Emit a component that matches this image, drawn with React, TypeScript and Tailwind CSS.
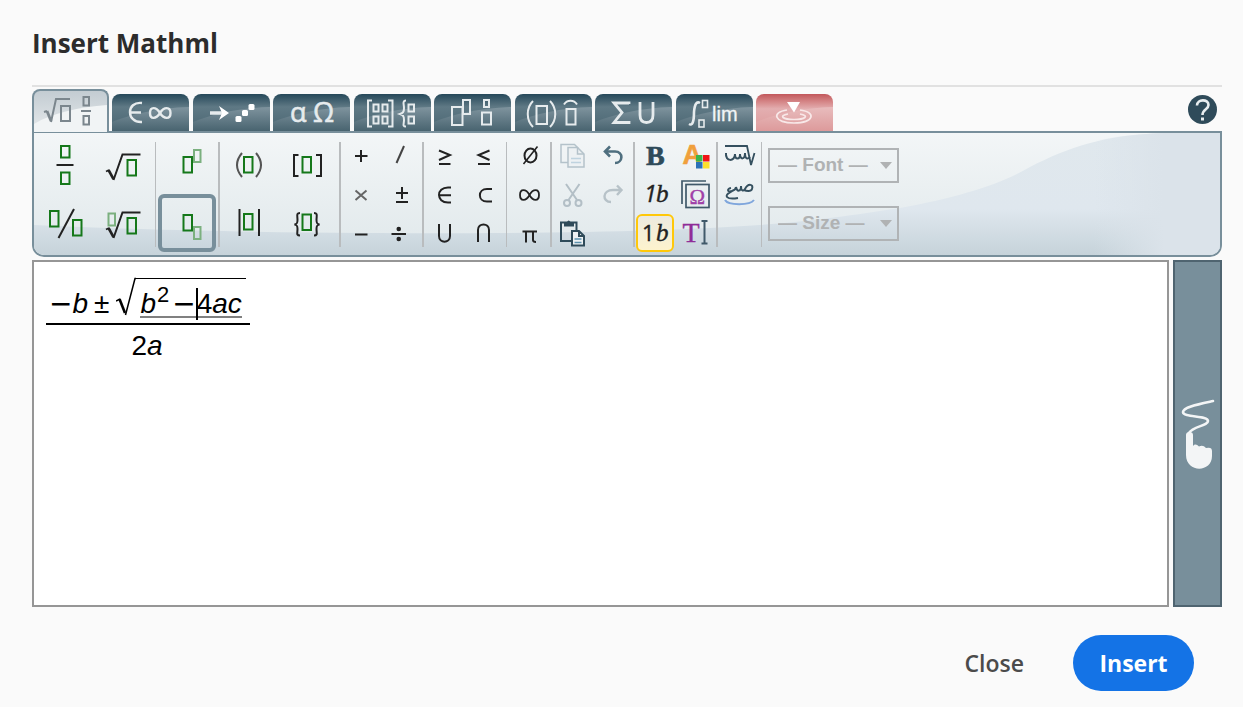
import type { ReactNode } from "react";

const SANS = "'Liberation Sans', Arial, sans-serif";
const SERIF = "'Liberation Serif', 'Times New Roman', serif";
const HUMANIST = "'Open Sans', 'Noto Sans', sans-serif";
const SYMBOL = "'DejaVu Sans', sans-serif";

function Tab({ label, danger, children }: { label: string; danger?: boolean; children: ReactNode }) {
  return (
    <button
      type="button"
      role="tab"
      aria-selected={false}
      aria-label={label}
      className={`relative h-[37px] w-[77px] overflow-hidden rounded-t-lg ${
        danger
          ? "bg-linear-to-b from-[#c2585c] via-[#e3aeb0] via-40% to-[#dd9a9b]"
          : "bg-linear-to-b from-[#26495a] via-[#5f7985] via-35% to-[#4a6672]"
      }`}
    >
      <svg viewBox="0 0 77 37" className="block h-[37px] w-[77px]">
        <path
          d="M0 28 C20 20 45 14 77 13 V37 H0Z"
          fill={danger ? "url(#glossRed)" : "url(#gloss)"}
        />
        <g fill="none" stroke="#e6ebed" strokeWidth="2">
          {children}
        </g>
      </svg>
    </button>
  );
}

function BigTool({ label, active, children }: { label: string; active?: boolean; children: ReactNode }) {
  return (
    <button
      type="button"
      aria-label={label}
      aria-pressed={!!active}
      className={`flex size-[58px] items-center justify-center ${
        active ? "rounded-md border-4 border-[#788f9b]" : ""
      }`}
    >
      <svg viewBox="-25 -25 50 50" className="size-[50px] shrink-0" fill="none" stroke="#222" strokeWidth="2">
        {children}
      </svg>
    </button>
  );
}

function Tool({
  label,
  active,
  disabled,
  children,
}: {
  label: string;
  active?: boolean;
  disabled?: boolean;
  children: ReactNode;
}) {
  return (
    <button
      type="button"
      aria-label={label}
      disabled={disabled}
      className={`flex size-[38px] items-center justify-center ${
        active ? "rounded-md border-2 border-[#ffc80a] bg-linear-to-b from-[#eceae0] to-[#fdf3cd]" : ""
      }`}
    >
      <svg viewBox="-17 -17 34 34" className="size-[34px] shrink-0" fill="none" stroke="#222" strokeWidth="2">
        {children}
      </svg>
    </button>
  );
}

const Slot = ({ x, y, w = 8.5, h = 15.5 }: { x: number; y: number; w?: number; h?: number }) => (
  <rect x={x} y={y} width={w} height={h} stroke="#15781a" strokeWidth="2" />
);
const FaintSlot = ({ x, y }: { x: number; y: number }) => (
  <rect x={x} y={y} width={6.5} height={12} stroke="#7bb07f" strokeWidth="2" />
);
const Radical = () => (
  <>
    <path d="M-17 6.500 L-14 5" strokeWidth="1.600" />
    <path d="M-14.500 5 L-9.500 14" strokeWidth="2.600" />
    <path d="M-9.500 15 L-0.500 -10.500 H17.500" strokeWidth="2" />
  </>
);

const Divider = ({ wide }: { wide?: boolean }) => (
  <div className={`h-[105px] shrink-0 bg-[#b9bcbe] ${wide ? "w-[2px]" : "w-px"}`} />
);

function SmallGroup({ width, children }: { width: string; children: ReactNode }) {
  return <div className={`grid h-[116px] shrink-0 grid-rows-3 place-items-center ${width}`}>{children}</div>;
}

function Picker({ label }: { label: string }) {
  return (
    <div className="relative">
      <select
        disabled
        aria-label={label}
        className="block h-[35px] w-[131px] appearance-none border-2 border-[#b0b3b5] bg-transparent pl-2 text-[19px] font-bold text-[#b0b2b3] opacity-100"
        style={{ fontFamily: SANS }}
      >
        <option>{`— ${label} —`}</option>
      </select>
      <svg viewBox="0 0 12 7" className="pointer-events-none absolute top-[14px] right-[7px] h-[7px] w-3">
        <path d="M0 0 H12 L6 7Z" fill="#b0b2b3" />
      </svg>
    </div>
  );
}

export default function App() {
  return (
    <main className="min-h-screen bg-[#fafafa] pr-[21px] pb-4 pl-8" style={{ fontFamily: HUMANIST }}>
      <header className="flex h-[87px] items-center border-b-2 border-[#e1e1e1]">
        <h1 className="text-[26px] leading-9 font-bold text-[#2c2c2c]">Insert Mathml</h1>
      </header>

      <div className="flex h-[44px] items-end justify-between">
        <div role="tablist" className="flex w-[801px] items-end justify-between">
          <button
            type="button"
            role="tab"
            aria-selected
            aria-label="General"
            className="relative z-10 -mb-px h-[43px] w-[77px] overflow-hidden rounded-t-lg border-2 border-b-0 border-[#788f9b] bg-linear-to-b from-[#c3ccd2] to-[#e6eaec]"
          >
            <svg viewBox="0 0 73 41" className="block h-[41px] w-[73px]" fill="none" stroke="#7b868d" strokeWidth="2">
              <path d="M0 33 C18 22 45 16 73 14 V41 H0Z" fill="#f1f4f5" stroke="none" />
              <path d="M10 21 L13 20" />
              <path d="M13 20 L17 30" strokeWidth="2.800" />
              <path d="M17 31 L22 8 H36" />
              <rect x="27" y="15" width="9" height="15" />
              <rect x="49.500" y="6" width="5.500" height="8.500" />
              <path d="M47 20 H57" />
              <rect x="49.500" y="25" width="5.500" height="8.500" />
            </svg>
          </button>
          <Tab label="Symbols">
            <path d="M30 9 C14 7 14 29 30 28 M18 18.500 H29" strokeWidth="2.400" />
            <path d="M48 19 C44 12.500 38 12.500 38 19 C38 25.500 44 25.500 48 19 C52 12.500 58.500 12.500 58.500 19 C58.500 25.500 52 25.500 48 19Z" strokeWidth="2.400" />
          </Tab>
          <Tab label="Arrows">
            <path d="M17 19 H30" strokeWidth="3.500" />
            <path d="M26 12 L36 19 L26 26 L29 19Z" fill="#fff" stroke="none" />
            <g fill="#fff" stroke="none">
              <rect x="42.500" y="22" width="6" height="6" rx="1.500" />
              <rect x="49" y="16" width="6" height="6" rx="1.500" />
              <rect x="55.500" y="10" width="6" height="6" rx="1.500" />
            </g>
          </Tab>
          <Tab label="Greek letters">
            <g fill="#e6ebed" stroke="#e6ebed" strokeWidth="0.600" fontFamily={HUMANIST}>
              <text x="17" y="28" fontSize="27">α</text>
              <text x="40" y="28" fontSize="27">Ω</text>
            </g>
          </Tab>
          <Tab label="Matrices">
            <path d="M18 6.500 H14 V32.500 H18 M34 6.500 H38.500 V32.500 H34 M52 6.500 C48 6.500 50 10.500 50 14 C50 18 49 19 46 20 C49 21 50 22 50 26 C50 30 48 32.500 52 32.500" />
            <rect x="19.500" y="10.500" width="5" height="7" />
            <rect x="28.500" y="10.500" width="5" height="7" />
            <rect x="19.500" y="22.500" width="5" height="7" />
            <rect x="28.500" y="22.500" width="5" height="7" />
            <rect x="54.500" y="10.500" width="5.500" height="7" />
            <rect x="54.500" y="22.500" width="5.500" height="7" />
          </Tab>
          <Tab label="Scripts and layout">
            <rect x="18" y="13" width="10.500" height="18" />
            <rect x="29" y="6" width="7" height="14" />
            <rect x="50" y="6" width="5" height="7" />
            <rect x="48" y="18.500" width="9" height="12" />
          </Tab>
          <Tab label="Decorations">
            <path d="M18 7 C11 14 11 26 18 33 M35 7 C42 14 42 26 35 33" strokeWidth="2" />
            <rect x="21.500" y="12" width="10.500" height="18" />
            <path d="M49 10.500 C52 5.500 59 5.500 62 10.500" />
            <rect x="51.500" y="15" width="9" height="15.500" />
          </Tab>
          <Tab label="Big operators">
            <path d="M34 10 V9 H19 L27 18.500 L19 28.500 H34 V27" strokeWidth="2.800" />
            <path d="M45 8 V21 Q45 28.500 51.500 28.500 Q58 28.500 58 21 V8" strokeWidth="2.800" />
          </Tab>
          <Tab label="Calculus">
            <path d="M24 9 Q19 6 18 18 Q18 33 13 30" strokeWidth="2.600" />
            <rect x="26.500" y="6.500" width="5" height="7" strokeWidth="1.600" />
            <rect x="23" y="26" width="5" height="7" strokeWidth="1.600" />
            <text x="36" y="27" fontSize="20" fill="#f1f4f5" stroke="#f1f4f5" strokeWidth="0.300" fontFamily={SANS}>
              lim
            </text>
          </Tab>
          <Tab label="Contextual" danger>
            <path d="M31 8 H44 L38 18.500Z" fill="#fff" stroke="none" />
            <g stroke="#f8e8e8" strokeWidth="1.700">
              <path d="M31 16 C15 18 18 29 38 29 C58 29 61 18 44 16" />
              <path d="M32 20 C22 22 27 25.500 38 25.500 C49 25.500 54 22 44 20" />
            </g>
          </Tab>
        </div>
        <button
          type="button"
          aria-label="Help"
          className="mr-[5px] mb-[7px] flex size-[29px] items-center justify-center rounded-full bg-[#2f4b5a]"
        >
          <svg viewBox="0 0 29 29" className="size-[29px]" fill="none" stroke="#e9eef0" strokeWidth="2.600">
            <path d="M9 10.500 C9 4 20.500 3.500 20.500 10 C20.500 14.500 14.500 14 14.500 20" />
            <path d="M14.500 22.500 V25.500" strokeWidth="3" />
          </svg>
        </button>
      </div>

      <div className="relative flex h-[126px] items-center overflow-hidden rounded-b-xl border-2 border-[#788f9b] bg-[#f1f4f5]">
        <svg viewBox="0 0 1186 122" preserveAspectRatio="none" className="absolute inset-0 size-full" aria-hidden="true">
          <defs>
            <linearGradient id="gloss" x2="0" y2="1">
              <stop offset="0" stopColor="#8a9da7" stopOpacity=".75" />
              <stop offset="1" stopColor="#48636f" stopOpacity=".75" />
            </linearGradient>
            <linearGradient id="glossRed" x2="0" y2="1">
              <stop offset="0" stopColor="#e8bcbd" />
              <stop offset="1" stopColor="#dd9a9b" />
            </linearGradient>
            <linearGradient id="sheet" x2="0" y2="1">
              <stop offset="0" stopColor="#f3f6f7" />
              <stop offset="1" stopColor="#e0e8eb" />
            </linearGradient>
            <linearGradient id="swoosh" gradientUnits="userSpaceOnUse" x1="0" y1="0" x2="0" y2="122">
              <stop offset="0" stopColor="#e0e8ed" />
              <stop offset=".62" stopColor="#dfe7ee" />
              <stop offset="1" stopColor="#c6d3da" />
            </linearGradient>
            <linearGradient id="edge">
              <stop offset="0" stopColor="#dbe3ea" stopOpacity="0" />
              <stop offset="1" stopColor="#dbe3ea" />
            </linearGradient>
          </defs>
          <rect width="1186" height="122" fill="url(#sheet)" />
          <path
            d="M0 92 C80 96 200 99 330 100 C520 101 640 98 726 92 C780 88 820 82 866 75 C925 64 965 52 996 34 C1035 14 1070 2 1130 0 H1186 V122 H0Z"
            fill="url(#swoosh)"
          />
          <path d="M1060 8 Q1085 2 1130 0 V122 H1060Z" fill="url(#edge)" />
          <rect x="1129" width="57" height="122" fill="#dbe3ea" />
        </svg>

        <div className="relative flex items-center">
          <div className="grid w-[121px] shrink-0 grid-cols-[58px_58px] pl-[2px]">
            <BigTool label="Fraction">
              <Slot x={-4} y={-19} h={11.5} />
              <path d="M-8.500 0 H8.500" />
              <Slot x={-4} y={7.5} h={11.5} />
            </BigTool>
            <BigTool label="Square root">
              <Radical />
              <Slot x={4.5} y={-5} />
            </BigTool>
            <BigTool label="Bevelled fraction">
              <Slot x={-15} y={-12} />
              <path d="M9 -14 L-6.500 15" />
              <Slot x={8} y={-3} />
            </BigTool>
            <BigTool label="Nth root">
              <FaintSlot x={-14.5} y={-9.5} />
              <Radical />
              <Slot x={4.5} y={-5} />
            </BigTool>
          </div>
          <Divider />
          <div className="grid w-[62px] shrink-0 pl-[2px]">
            <BigTool label="Superscript">
              <FaintSlot x={7} y={-15} />
              <Slot x={-3.5} y={-8} />
            </BigTool>
            <BigTool label="Subscript" active>
              <FaintSlot x={7} y={4} />
              <Slot x={-3.5} y={-8} />
            </BigTool>
          </div>
          <Divider wide />
          <div className="grid w-[119px] shrink-0 grid-cols-[58px_58px]">
            <BigTool label="Parentheses">
              <path d="M-7 -12 Q-17 0 -7 12 M7 -12 Q17 0 7 12" stroke="#555" />
              <Slot x={-5} y={-8} />
            </BigTool>
            <BigTool label="Square brackets">
              <path d="M-8.500 -10 H-13 V11 H-8.500 M9 -10 H14 V11 H9" />
              <Slot x={-4.5} y={-8} />
            </BigTool>
            <BigTool label="Vertical bars">
              <path d="M-9.500 -14 V13 M10 -14 V13" />
              <Slot x={-5} y={-9} />
            </BigTool>
            <BigTool label="Curly brackets">
              <path d="M-7 -10 C-11 -10 -9.500 -7 -9.500 -3 C-9.500 0 -10 1 -12.500 1.500 C-10 2 -9.500 3 -9.500 6 C-9.500 10 -11 12.500 -7 12.500 M7 -10 C11 -10 9.500 -7 9.500 -3 C9.500 0 10 1 12.500 1.500 C10 2 9.500 3 9.500 6 C9.500 10 11 12.500 7 12.500" />
              <Slot x={-4.5} y={-8.5} />
            </BigTool>
          </div>
          <Divider wide />

          <SmallGroup width="w-[81px] grid-cols-2">
            <Tool label="Plus">
              <path d="M-6 1 H6.500 M0 -5 V7" />
            </Tool>
            <Tool label="Slash">
              <path d="M2 -9 L-5.500 8" stroke="#444" />
            </Tool>
            <Tool label="Times">
              <path d="M-5.500 -3.500 L5.500 6 M5.500 -3.500 L-5.500 6" stroke="#666" />
            </Tool>
            <Tool label="Plus minus">
              <path d="M-6 -1 H6 M0 -7 V5 M-6 8 H6" />
            </Tool>
            <Tool label="Minus">
              <path d="M-6 1.500 H6.500" />
            </Tool>
            <Tool label="Divide">
              <path d="M-10.500 1 H4" />
              <circle cx="-3.250" cy="-4" r="1.300" fill="#222" />
              <circle cx="-3.250" cy="6" r="1.300" fill="#222" />
            </Tool>
          </SmallGroup>
          <Divider wide />

          <SmallGroup width="w-[82px] grid-cols-2">
            <Tool label="Greater or equal">
              <path d="M-6 -4.500 L5 0 L-6 5 M-6 9 H5.500" />
            </Tool>
            <Tool label="Less or equal">
              <path d="M3.500 -4.500 L-7.500 0 L3.500 5 M-8 9 H4" />
            </Tool>
            <Tool label="Element of">
              <path d="M6 -6.500 H3 C-9 -6.500 -9 8.500 3 8.500 H6 M-5 1.200 H6" />
            </Tool>
            <Tool label="Subset">
              <path d="M6 -5 H1 C-8.500 -5 -8.500 7.500 1 7.500 H6" />
            </Tool>
            <Tool label="Union">
              <path d="M-6 -9 V3 C-6 10.500 5 10.500 5 3 V-9" />
            </Tool>
            <Tool label="Intersection">
              <path d="M-8 9 V-3 C-8 -10.500 3 -10.500 3 -3 V9" />
            </Tool>
          </SmallGroup>
          <Divider />

          <SmallGroup width="w-[43px] pl-[3px]">
            <Tool label="Empty set">
              <ellipse cx="0.500" cy="0.500" rx="6" ry="7" />
              <path d="M7.500 -8.500 L-6.500 9" strokeWidth="1.600" />
            </Tool>
            <Tool label="Infinity">
              <path d="M-0.500 1 C-4 -5.500 -10 -5.500 -10 1 C-10 7.500 -4 7.500 -0.500 1 C3 -5.500 9 -5.500 9 1 C9 7.500 3 7.500 -0.500 1Z" strokeWidth="1.800" />
            </Tool>
            <Tool label="Pi">
              <path d="M-7.500 -1.500 H7 M-4 -1 V9.500 M3 -1 V7 Q3 9 6 9" />
            </Tool>
          </SmallGroup>
          <Divider wide />

          <SmallGroup width="w-[81px] grid-cols-2">
            <Tool label="Copy" disabled>
              <g stroke="#b4c2ca" strokeWidth="1.500">
                <path d="M-4 7.500 H-11 V-10.500 H2.500 L6 -7" />
                <path d="M-4 -7.500 H5.500 L12 -1 V12 H-4Z" fill="#edf1f3" />
                <path d="M5.500 -7.500 V-1 H12" />
                <path d="M-1 3.500 H9 M-1 7.500 H9" stroke="#bfd3df" />
              </g>
            </Tool>
            <Tool label="Undo">
              <path d="M-3 -8.500 L-8 -3.500 L-3 1.500 M-8 -3.500 H2 C11 -3.500 10 8 2 8" stroke="#4f6f7f" strokeWidth="2.600" />
            </Tool>
            <Tool label="Cut" disabled>
              <g stroke="#b3bfc6" strokeWidth="2">
                <path d="M-6 -10 L5 6 M7.500 -10 L-3.500 6" />
                <circle cx="-5" cy="9" r="3" />
                <circle cx="6.500" cy="9" r="3" />
              </g>
            </Tool>
            <Tool label="Redo" disabled>
              <path d="M4 -8.500 L8.500 -4 L4 1 M8.500 -4 H0 C-11 -4 -11 8 -2 8" stroke="#b7c2c8" strokeWidth="2.400" />
            </Tool>
            <Tool label="Paste">
              <g stroke="#2f4b5a" strokeWidth="2">
                <path d="M-1 8 H-11 V-10.500 H4.500 V-2" />
                <path d="M-8 -11 H-5 Q-3.500 -14 -1.500 -11 H2 V-6.500 H-8Z" fill="#2f4b5a" stroke="none" />
                <path d="M0 -2 H7 L12 3 V12.500 H0Z" fill="#eef2f4" />
                <path d="M7 -2 V3 H12" />
                <path d="M2.500 6 H9.500 M2.500 9.500 H9.500" stroke="#5c92ae" strokeWidth="1.500" />
              </g>
            </Tool>
          </SmallGroup>
          <Divider wide />

          <SmallGroup width="w-[81px] grid-cols-2">
            <Tool label="Bold">
              <text x="-9" y="10" fontSize="28" fontWeight="700" fill="#2f4b5a" stroke="#2f4b5a" strokeWidth="0.600" fontFamily={SERIF}>
                B
              </text>
            </Tool>
            <Tool label="Colour">
              <text x="-13.500" y="8.500" fontSize="27" fontWeight="700" fill="#f0a03c" stroke="#f0a03c" strokeWidth="0.600" fontFamily={SANS}>
                A
              </text>
              <g stroke="none">
                <rect x="0" y="0" width="6.500" height="6.500" fill="#3cb44a" />
                <rect x="7" y="0" width="6.500" height="6.500" fill="#f01414" />
                <rect x="0" y="7" width="6.500" height="6.500" fill="#2a72b8" />
                <rect x="7" y="7" width="6.500" height="6.500" fill="#fbe02c" />
              </g>
            </Tool>
            <Tool label="Italic">
              <g fill="#222" stroke="#222" strokeWidth="0.400" fontStyle="italic">
                <text x="-11" y="8" fontSize="23" fontFamily={HUMANIST}>1</text>
                <text x="1" y="8" fontSize="25" fontFamily={SERIF}>b</text>
              </g>
            </Tool>
            <Tool label="Special characters">
              <g stroke="#40596a" strokeWidth="1.700">
                <path d="M-14 10 V-13 H10" />
                <rect x="-10" y="-9.500" width="23" height="23" />
              </g>
              <text x="-6.500" y="9.500" fontSize="21" fill="#a040a8" stroke="#a040a8" strokeWidth="0.400" fontFamily={SERIF}>
                Ω
              </text>
            </Tool>
            <Tool label="Automatic style" active>
              <g fill="#222" stroke="#222" strokeWidth="0.400">
                <text x="-13" y="8" fontSize="22" fontFamily={HUMANIST}>1</text>
                <text x="1" y="8" fontSize="25" fontStyle="italic" fontFamily={SERIF}>b</text>
              </g>
            </Tool>
            <Tool label="Text mode">
              <text x="-13.500" y="8.500" fontSize="28" fill="#8f2c98" stroke="#8f2c98" strokeWidth="0.400" fontFamily={SERIF}>
                T
              </text>
              <path d="M5.500 -12 H11.500 M8.500 -12 V10.500 M5.500 10.500 H11.500" stroke="#40596a" />
            </Tool>
          </SmallGroup>
          <Divider wide />

          <SmallGroup width="w-[43px]">
            <Tool label="Right to left">
              <path d="M-15 -9 H7 L11 10 L14.500 -2" stroke="#35505f" strokeWidth="1.800" />
              <path
                d="M-14 -2 C-15 7 -5 7 -5 -1 C-5 5 0 5 0 -1 C0 5 5 5 5 -2 C5 5 8 4 10 2"
                stroke="#35505f"
                strokeWidth="2"
              />
            </Tool>
            <Tool label="Arabic style">
              <path
                d="M-9 -6 C-14 -5 -12 -1 -8 -3 C-18 2 -13 6 -2 4 M-8 -3 C-5 -4 -4 -5 -4 -7 C-3 -2 1 -2 1 -8 C1 -2 4 -3 5 -5 C8 -11 14 -10 12 -5 C11 -2 6 -3 4 -4"
                stroke="#35505f"
                strokeWidth="2"
              />
              <path d="M-15 6 C-12 11.500 10 11.500 14 6" stroke="#7fa6dc" strokeWidth="2" />
            </Tool>
          </SmallGroup>
          <Divider />

          <div className="flex flex-col gap-[23px] pl-[6px]">
            <Picker label="Font" />
            <Picker label="Size" />
          </div>
        </div>
      </div>

      <div className="mt-[3px] flex min-h-[347px] gap-1">
        <div
          role="textbox"
          aria-label="Formula"
          tabIndex={0}
          className="flex-1 border-2 border-[#969696] bg-white pt-[15px] pl-3 text-[28px] leading-8 text-black"
          style={{ fontFamily: SANS }}
        >
          <div className="flex w-[204px] flex-col items-center">
            <div className="flex h-12 w-full items-start border-b-2 border-black pl-[3px]">
              <span className="flex pt-[11px]">
                <span style={{ fontFamily: SYMBOL }}>−</span>
                <i>b</i>
                <span className="ml-[6px]">±</span>
              </span>
              <svg viewBox="0 0 20 42" className="ml-[7px] h-[42px] w-5 shrink-0" fill="none" stroke="#000">
                <path d="M0 24 L4 22" strokeWidth="1.500" />
                <path d="M3.500 22 L9 36" strokeWidth="2.600" />
                <path d="M9.500 38 L19 1.500 H20" strokeWidth="1.500" />
              </svg>
              <span className="mt-px flex h-[40px] items-start border-t border-black px-1">
                <span className="mt-[9px] flex h-[30px] items-start border-b-2 border-[#808080]">
                  <i>b</i>
                  <span className="-mt-[9px] ml-px text-[22px]">2</span>
                  <span className="ml-[3px]" style={{ fontFamily: SYMBOL }}>−</span>
                  <span className="-mr-px h-8 w-[2px] shrink-0 bg-black" />
                  <span>4</span>
                  <i>ac</i>
                </span>
              </span>
            </div>
            <div className="pr-[2px] pt-[5px]">
              2<i>a</i>
            </div>
          </div>
        </div>
        <button
          type="button"
          aria-label="Handwriting"
          className="flex w-[49px] items-center justify-center border-2 border-[#4f6470] bg-[#788f9b]"
        >
          <svg viewBox="0 0 34 70" className="h-[70px] w-[34px]">
            <path
              d="M32 2 C18 5 2 8 2 13 C2 19 27 16 27 22 C27 27 12 27 8 34"
              fill="none"
              stroke="#f3f5f6"
              strokeWidth="2.600"
              strokeLinecap="round"
            />
            <path
              d="M5 36 Q5 33 8.500 33 Q12 33 12 36 V47 Q14.500 44 18 47.500 Q22 45.500 25 49 Q31 47.500 31 52 V57 C31 74 5 74 5 56Z"
              fill="#f3f5f6"
            />
          </svg>
        </button>
      </div>

      <footer className="mt-7 flex items-center justify-end gap-[18px] pr-7 text-[23px] leading-8">
        <button type="button" className="h-14 px-[31px] font-semibold text-[#4b4b4b]">
          Close
        </button>
        <button type="button" className="h-14 w-[121px] rounded-full bg-[#1473e6] font-bold text-white">
          Insert
        </button>
      </footer>
    </main>
  );
}
